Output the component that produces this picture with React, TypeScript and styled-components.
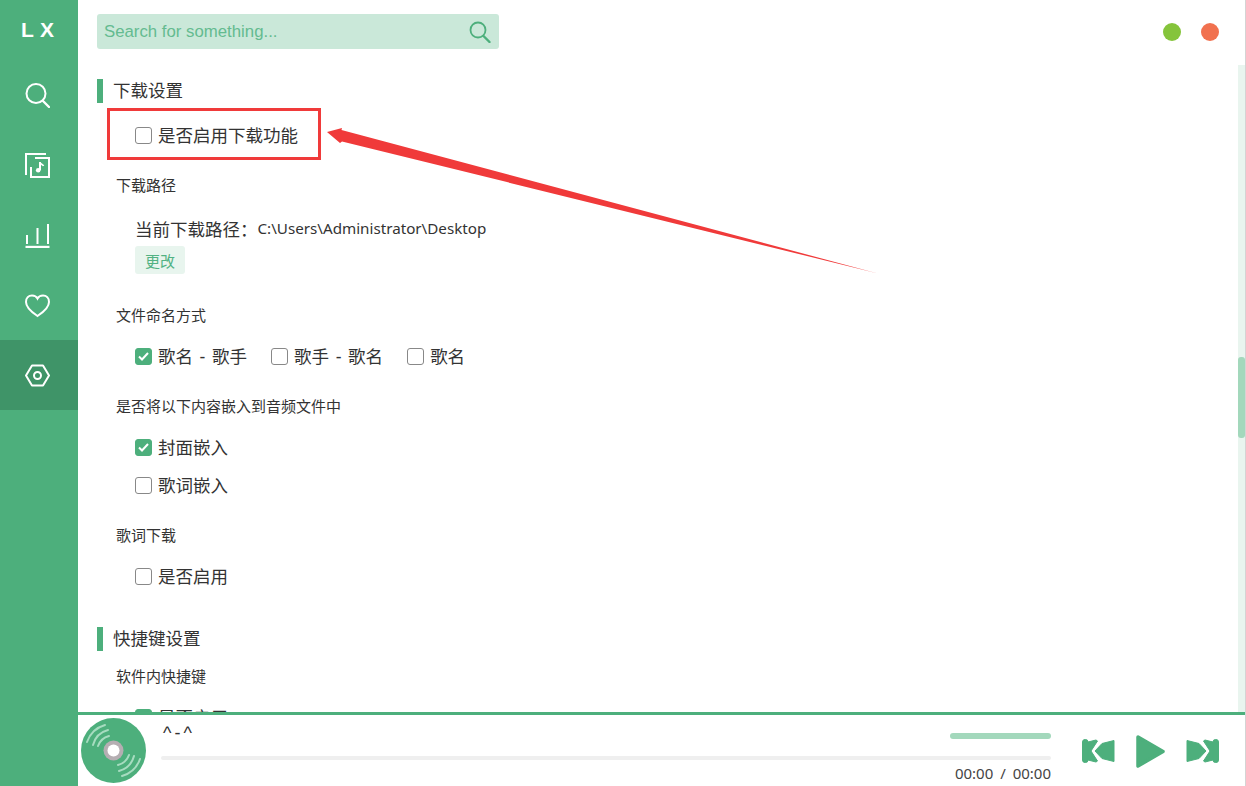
import React from 'react';
import styled, {createGlobalStyle} from 'styled-components';

const GREEN = '#4daf7c';

const GlobalStyle = createGlobalStyle`
  html, body {
    margin: 0;
    padding: 0;
    height: 100%;
    background: #fff;
  }
  body {
    font-family: "Liberation Sans", "Noto Sans CJK SC", sans-serif;
    color: #333;
    overflow: hidden;
  }
`;

const AppWrapper = styled.div`
  width: 1246px;
  height: 786px;
  display: flex;
  position: relative;
  overflow: hidden;
  box-sizing: border-box;
  border-right: 1px solid #d4d4d4;
`;

const Sidebar = styled.aside`
  width: 78px;
  flex: none;
  background: ${GREEN};
  display: flex;
  flex-direction: column;
`;

const Logo = styled.div`
  height: 60px;
  display: flex;
  align-items: center;
  justify-content: center;
  color: #fff;
  font-family: "Liberation Sans", sans-serif;
  font-size: 21px;
  font-weight: 700;
  letter-spacing: 6px;
  padding-left: 3px;
  box-sizing: border-box;
`;

const NavItem = styled.div<{$active?: boolean}>`
  height: 70px;
  padding-right: 3px;
  box-sizing: border-box;
  display: flex;
  align-items: center;
  justify-content: center;
  background: ${p => (p.$active ? '#3f9468' : 'transparent')};
  color: #fff;
`;

const Main = styled.main`
  flex: 1;
  min-width: 0;
  display: flex;
  flex-direction: column;
`;

const Toolbar = styled.header`
  height: 62px;
  flex: none;
  display: flex;
  align-items: flex-start;
  justify-content: space-between;
  padding: 14px 26px 0 19px;
  box-sizing: border-box;
`;

const SearchBox = styled.div`
  width: 402px;
  height: 35px;
  background: #cae8d9;
  border-radius: 3px;
  display: flex;
  align-items: center;
  justify-content: space-between;
  padding: 0 8px 0 7px;
  box-sizing: border-box;
  color: #64bb90;
  font-size: 16.8px;
`;

const WindowButtons = styled.div`
  display: flex;
  gap: 20px;
  padding-top: 9px;
`;

const Dot = styled.span<{$color: string}>`
  width: 18px;
  height: 18px;
  border-radius: 50%;
  background: ${p => p.$color};
`;

const ContentWrap = styled.div`
  flex: 1;
  min-height: 0;
  display: flex;
  position: relative;
`;

const Content = styled.div`
  flex: 1;
  min-width: 0;
  overflow: hidden;
  padding: 17px 0 0 19px;
  box-sizing: border-box;
`;

const ScrollTrack = styled.div`
  width: 7px;
  flex: none;
  margin-top: 3px;
  background: #e9f5ef;
  display: flex;
  flex-direction: column;
  padding-top: 292px;
  box-sizing: border-box;
`;

const ScrollThumb = styled.div`
  height: 81px;
  border-radius: 3px;
  background: #a3d8bc;
`;

const SectionTitle = styled.h2`
  margin: 0;
  height: 24px;
  border-left: 6px solid ${GREEN};
  padding-left: 10px;
  font-size: 17.5px;
  font-weight: 400;
  line-height: 25px;
  color: #333;
`;

const GroupTitle = styled.h3<{$top?: number}>`
  margin: ${p => p.$top ?? 0}px 0 0;
  padding-left: 19px;
  font-size: 15px;
  font-weight: 400;
  line-height: 20px;
  color: #333;
`;

const GroupBody = styled.div<{$height: number; $pad?: number}>`
  height: ${p => p.$height}px;
  padding: ${p => p.$pad ?? 20}px 0 0 38px;
  box-sizing: border-box;
`;

const Row = styled.div`
  display: flex;
  gap: 24px;
  height: 38px;
  box-sizing: border-box;
  align-items: flex-start;
`;

const CheckLabel = styled.label`
  display: flex;
  align-items: center;
  gap: 6px;
  height: 20px;
  font-size: 17.5px;
  word-spacing: 1.75px;
  color: #333;
`;

const LabelText = styled.span`
  margin-top: -2px;
`;

const CheckBox = styled.span<{$on?: boolean}>`
  width: 17px;
  height: 17px;
  box-sizing: border-box;
  border-radius: 3px;
  border: 1px solid ${p => (p.$on ? GREEN : '#888')};
  background: ${p => (p.$on ? GREEN : '#fff')};
  display: flex;
  align-items: center;
  justify-content: center;
`;

const PathLine = styled.div`
  display: flex;
  align-items: center;
  height: 24px;
  font-size: 17.5px;
  color: #333;
`;

const PathValue = styled.span`
  font-family: "Noto Sans", sans-serif;
  font-size: 15.2px;
`;

const SmallButton = styled.button`
  display: block;
  margin: 6px 0 0;
  width: 50px;
  height: 28px;
  border: none;
  padding: 0;
  border-radius: 3px;
  background: #e8f5ee;
  color: #52b283;
  font-family: inherit;
  font-size: 15px;
`;

const Player = styled.footer`
  height: 74px;
  flex: none;
  border-top: 3px solid ${GREEN};
  box-sizing: border-box;
  display: flex;
  background: #fff;
`;

const Disc = styled.div`
  width: 83px;
  flex: none;
  padding: 3px 0 0 3px;
  box-sizing: border-box;
`;

const PlayerInfo = styled.div`
  width: 890px;
  flex: none;
  display: flex;
  flex-direction: column;
  position: relative;
`;

const SongName = styled.div`
  height: 41px;
  padding: 8px 0 0 2px;
  box-sizing: border-box;
  font-size: 18px;
  letter-spacing: 3px;
  line-height: 20px;
  color: #333;
`;

const Progress = styled.div`
  height: 4px;
  border-radius: 2px;
  background: #efefef;
`;

const TimeText = styled.div`
  padding-top: 3px;
  text-align: right;
  font-family: "Noto Sans", sans-serif;
  font-size: 15px;
  word-spacing: 3px;
  line-height: 20px;
  color: #444;
`;

const Volume = styled.div`
  position: absolute;
  top: 18px;
  right: 0;
  width: 101px;
  height: 6px;
  border-radius: 3px;
  background: #a3d8bc;
`;

const Controls = styled.div`
  display: flex;
  align-items: center;
  gap: 21px;
  margin-left: 31px;
  padding-top: 1px;
`;

const Annotation = styled.div`
  position: absolute;
  left: 107px;
  top: 108px;
  width: 214px;
  height: 52px;
  box-sizing: border-box;
  border: 3px solid #f03a3a;
`;

const ArrowSvg = styled.svg`
  position: absolute;
  left: 320px;
  top: 120px;
`;

const Check: React.FC = () => (
  <svg width="11" height="9" viewBox="0 0 11 9" fill="none" stroke="#fff" strokeWidth="2">
    <path d="M1 4.5 L4 7.5 L10 1" />
  </svg>
);

const Option: React.FC<{label: string; on?: boolean}> = ({label, on}) => (
  <CheckLabel>
    <CheckBox $on={on}>{on && <Check />}</CheckBox>
    <LabelText>{label}</LabelText>
  </CheckLabel>
);

const IconProps = {width: 25, height: 25, viewBox: '0 0 25 25', fill: 'none', stroke: '#fff', strokeWidth: 2};

const App: React.FC = () => (
  <AppWrapper>
    <GlobalStyle />
    <Sidebar>
      <Logo>LX</Logo>
      <NavItem>
        <svg {...IconProps}>
          <circle cx="11" cy="10.5" r="9.5" />
          <path d="M18 18 L24 24" strokeLinecap="round" strokeWidth="2.4" />
        </svg>
      </NavItem>
      <NavItem>
        <svg {...IconProps}>
          <path d="M21 1 H1 V22" />
          <path d="M10 5 H24 V24 H6 V14" />
          <path d="M15 9 V17" />
          <path d="M15 9.5 C16 11.5 18 11.5 18.5 13" strokeWidth="1.6" />
          <circle cx="13.2" cy="17.2" r="2.3" fill="#fff" stroke="none" />
        </svg>
      </NavItem>
      <NavItem>
        <svg {...IconProps}>
          <path d="M0.5 24 H24.5" strokeWidth="2.4" />
          <path d="M2 21 V12 M12.5 21 V5 M23 21 V1" />
        </svg>
      </NavItem>
      <NavItem>
        <svg {...IconProps}>
          <path d="M12.5 23 C8 20 1 15.5 1 9 C1 5 3.6 2.5 7 2.5 C9.5 2.5 11.5 3.6 12.5 5.5 C13.5 3.6 15.5 2.5 18 2.5 C21.4 2.5 24 5 24 9 C24 15.5 17 20 12.5 23 Z" />
        </svg>
      </NavItem>
      <NavItem $active>
        <svg {...IconProps}>
          <path d="M7 2.5 H18 L24 12.5 L18 22.5 H7 L1 12.5 Z" strokeLinejoin="round" />
          <circle cx="12.5" cy="12.5" r="3.5" />
        </svg>
      </NavItem>
    </Sidebar>
    <Main>
      <Toolbar>
        <SearchBox>
          Search for something...
          <svg width="22" height="22" viewBox="0 0 22 22" fill="none" stroke={GREEN} strokeWidth="1.8">
            <circle cx="9" cy="9" r="7.5" />
            <path d="M14.5 15 L20.5 21" strokeLinecap="round" strokeWidth="2.4" />
          </svg>
        </SearchBox>
        <WindowButtons>
          <Dot $color="#85c43b" />
          <Dot $color="#f1714f" />
        </WindowButtons>
      </Toolbar>
      <ContentWrap>
        <Content>
          <SectionTitle>下载设置</SectionTitle>
          <GroupBody $height={73} $pad={22}>
            <Option label="是否启用下载功能" />
          </GroupBody>
          <GroupTitle>下载路径</GroupTitle>
          <GroupBody $height={110}>
            <PathLine>
              当前下载路径：<PathValue>C:\Users\Administrator\Desktop</PathValue>
            </PathLine>
            <SmallButton>更改</SmallButton>
          </GroupBody>
          <GroupTitle>文件命名方式</GroupTitle>
          <GroupBody $height={71}>
            <Row>
              <Option label="歌名 - 歌手" on />
              <Option label="歌手 - 歌名" />
              <Option label="歌名" />
            </Row>
          </GroupBody>
          <GroupTitle>是否将以下内容嵌入到音频文件中</GroupTitle>
          <GroupBody $height={109}>
            <Row><Option label="封面嵌入" on /></Row>
            <Row><Option label="歌词嵌入" /></Row>
          </GroupBody>
          <GroupTitle>歌词下载</GroupTitle>
          <GroupBody $height={81}>
            <Option label="是否启用" />
          </GroupBody>
          <SectionTitle>快捷键设置</SectionTitle>
          <GroupTitle $top={16}>软件内快捷键</GroupTitle>
          <GroupBody $height={60}>
            <Option label="是否启用" on />
          </GroupBody>
        </Content>
        <ScrollTrack>
          <ScrollThumb />
        </ScrollTrack>
      </ContentWrap>
      <Player>
        <Disc>
          <svg width="65" height="65" viewBox="0 0 65 65" fill="none">
            <circle cx="32.5" cy="32.5" r="32.5" fill={GREEN} />
            <g stroke="#a7dcc0" strokeWidth="2" strokeLinecap="round">
              <path d="M6 24 A27 27 0 0 1 24 7" />
              <path d="M12 27 A21 21 0 0 1 27 12" />
              <path d="M17 28 A16 16 0 0 1 28 18" />
              <path d="M59 41 A27 27 0 0 1 41 58" />
              <path d="M53 38 A21 21 0 0 1 38 53" />
              <path d="M48 37 A16 16 0 0 1 37 47" />
            </g>
            <circle cx="32.5" cy="32.5" r="10" fill="#b5aeb2" />
            <circle cx="32.5" cy="32.5" r="6" fill="#fff" />
          </svg>
        </Disc>
        <PlayerInfo>
          <SongName>^-^</SongName>
          <Progress />
          <TimeText>00:00 / 00:00</TimeText>
          <Volume />
        </PlayerInfo>
        <Controls>
          <svg width="33" height="24" viewBox="0 0 33 24" fill={GREEN} stroke={GREEN} strokeLinejoin="round">
            <rect x="0.5" y="0.5" width="5.5" height="23" rx="2.5" />
            <path d="M6 3 L14 1 L15.5 2 L9 12 L15.5 22 L14 23 L6 21 Z" />
            <path d="M13 12 L20 4.5 L32 1.5 V22.5 L20 19.5 Z" />
          </svg>
          <svg width="29" height="33" viewBox="0 0 29 33" fill={GREEN}>
            <path d="M2 2 L27 16.5 L2 31 Z" stroke={GREEN} strokeWidth="3.5" strokeLinejoin="round" />
          </svg>
          <svg width="33" height="24" viewBox="0 0 33 24" fill={GREEN} stroke={GREEN} strokeLinejoin="round">
            <rect x="27" y="0.5" width="5.5" height="23" rx="2.5" />
            <path d="M27 3 L19 1 L17.5 2 L24 12 L17.5 22 L19 23 L27 21 Z" />
            <path d="M20 12 L13 4.5 L1 1.5 V22.5 L13 19.5 Z" />
          </svg>
        </Controls>
      </Player>
    </Main>
    <Annotation />
    <ArrowSvg width="560" height="160" viewBox="0 0 560 160">
      <path d="M7 12 L22 8 L21.5 10 L556 153 L22 21.5 L20 23 Z" fill="#f03a3a" />
    </ArrowSvg>
  </AppWrapper>
);

export default App;
